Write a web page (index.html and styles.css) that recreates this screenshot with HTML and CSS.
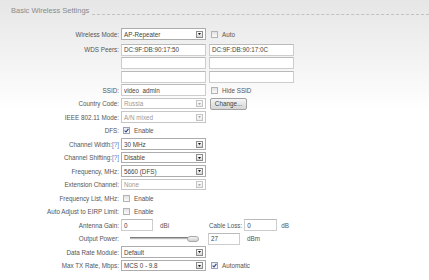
FILE: index.html
```html
<!DOCTYPE html>
<html lang="en">
  <head>
    <meta charset="UTF-8" />
    <title>Basic Wireless Settings</title>
    <link rel="stylesheet" href="styles.css">
  </head>
  <body>
    <div class="legend">
      <span class="legend-text">Basic Wireless Settings</span>
      <span class="legend-line"></span>
    </div>

    <div class="form">
      <div class="row row-first">
        <span class="lbl">Wireless Mode:</span>
        <div class="cell">
          <div class="select">AP-Repeater<span class="arrow"><svg width="3" height="2" viewBox="0 0 3 2"><path d="M0 0H3L1.5 2Z" /></svg></span></div>
        </div>
        <div class="cell2"><span class="check"></span><span class="opt">Auto</span></div>
      </div>

      <div class="row">
        <span class="lbl">WDS Peers:</span>
        <div class="cell"><input class="input" type="text" value="DC:9F:DB:90:17:50"></div>
        <div class="cell2"><input class="input" type="text" value="DC:9F:DB:90:17:0C"></div>
      </div>
      <div class="row">
        <span class="lbl"></span>
        <div class="cell"><input class="input" type="text" value=""></div>
        <div class="cell2"><input class="input" type="text" value=""></div>
      </div>
      <div class="row">
        <span class="lbl"></span>
        <div class="cell"><input class="input" type="text" value=""></div>
        <div class="cell2"><input class="input" type="text" value=""></div>
      </div>

      <div class="row">
        <span class="lbl">SSID:</span>
        <div class="cell"><input class="input" type="text" value="video_admin"></div>
        <div class="cell2"><span class="check"></span><span class="opt">Hide SSID</span></div>
      </div>

      <div class="row">
        <span class="lbl">Country Code:</span>
        <div class="cell">
          <div class="select disabled">Russia<span class="arrow"><svg width="3" height="2" viewBox="0 0 3 2"><path d="M0 0H3L1.5 2Z" /></svg></span></div>
        </div>
        <div class="cell2"><button class="btn">Change...</button></div>
      </div>

      <div class="row">
        <span class="lbl">IEEE 802.11 Mode:</span>
        <div class="cell">
          <div class="select disabled">A/N mixed<span class="arrow"><svg width="3" height="2" viewBox="0 0 3 2"><path d="M0 0H3L1.5 2Z" /></svg></span></div>
        </div>
      </div>

      <div class="row">
        <span class="lbl">DFS:</span>
        <div class="cell"><span class="check on"><svg width="5" height="5" viewBox="0 0 5 5"><path d="M0.6 2.6L2 4L4.4 0.8" /></svg></span><span class="opt">Enable</span></div>
      </div>

      <div class="row">
        <span class="lbl">Channel Width:<span class="help">[?]</span></span>
        <div class="cell">
          <div class="select">30 MHz<span class="arrow"><svg width="3" height="2" viewBox="0 0 3 2"><path d="M0 0H3L1.5 2Z" /></svg></span></div>
        </div>
      </div>

      <div class="row">
        <span class="lbl">Channel Shifting:<span class="help">[?]</span></span>
        <div class="cell">
          <div class="select">Disable<span class="arrow"><svg width="3" height="2" viewBox="0 0 3 2"><path d="M0 0H3L1.5 2Z" /></svg></span></div>
        </div>
      </div>

      <div class="row">
        <span class="lbl">Frequency, MHz:</span>
        <div class="cell">
          <div class="select">5660 (DFS)<span class="arrow"><svg width="3" height="2" viewBox="0 0 3 2"><path d="M0 0H3L1.5 2Z" /></svg></span></div>
        </div>
      </div>

      <div class="row">
        <span class="lbl">Extension Channel:</span>
        <div class="cell">
          <div class="select disabled">None<span class="arrow"><svg width="3" height="2" viewBox="0 0 3 2"><path d="M0 0H3L1.5 2Z" /></svg></span></div>
        </div>
      </div>

      <div class="row">
        <span class="lbl">Frequency List, MHz:</span>
        <div class="cell"><span class="check"></span><span class="opt">Enable</span></div>
      </div>

      <div class="row">
        <span class="lbl">Auto Adjust to EIRP Limit:</span>
        <div class="cell"><span class="check"></span><span class="opt">Enable</span></div>
      </div>

      <div class="row">
        <span class="lbl">Antenna Gain:</span>
        <div class="cell"><input class="input small" type="text" value="0"><span class="unit">dBi</span></div>
        <div class="cell2">
          <span class="lbl2">Cable Loss:</span>
          <input class="input small loss" type="text" value="0"><span class="unit unit-db">dB</span>
        </div>
      </div>

      <div class="row">
        <span class="lbl">Output Power:</span>
        <div class="cell">
          <div class="slider"><span class="track"></span><span class="thumb"></span></div>
        </div>
        <div class="cell2 power"><input class="input small" type="text" value="27"><span class="unit">dBm</span></div>
      </div>

      <div class="row">
        <span class="lbl">Data Rate Module:</span>
        <div class="cell">
          <div class="select">Default<span class="arrow"><svg width="3" height="2" viewBox="0 0 3 2"><path d="M0 0H3L1.5 2Z" /></svg></span></div>
        </div>
      </div>

      <div class="row">
        <span class="lbl">Max TX Rate, Mbps:</span>
        <div class="cell">
          <div class="select">MCS 0 - 9.8<span class="arrow"><svg width="3" height="2" viewBox="0 0 3 2"><path d="M0 0H3L1.5 2Z" /></svg></span></div>
        </div>
        <div class="cell2"><span class="check on"><svg width="5" height="5" viewBox="0 0 5 5"><path d="M0.6 2.6L2 4L4.4 0.8" /></svg></span><span class="opt">Automatic</span></div>
      </div>
    </div>
  </body>
</html>
```

FILE: styles.css
```css
* {
  margin: 0;
  padding: 0;
  box-sizing: border-box;
  font-family: "Liberation Sans", Arial, sans-serif;
}
body {
  width: 429px;
  height: 280px;
  overflow: hidden;
  font-size: 6.3px;
  color: #555;
  background: linear-gradient(#e6e6e6, #f9f9f9 85px, #fff 110px);
}
.legend {
  display: flex;
  height: 15px;
  padding: 6px 0 0 11px;
}
.legend-text {
  font-size: 7.5px;
  line-height: 9px;
  color: #8a8a8a;
}
.legend-line {
  flex: 1;
  margin-left: 3px;
  border-bottom: 1px dashed #c2c2c2;
}
.form {
  padding-top: 12.25px;
}
.row {
  display: flex;
  align-items: center;
  height: 13.5px;
}
.row-first {
  margin-bottom: 2px;
}
.lbl {
  width: 119px;
  text-align: right;
  white-space: nowrap;
}
.help {
  color: #4a78c8;
}
.cell {
  display: flex;
  align-items: center;
  width: 88px;
  margin-left: 2px;
}
.cell2 {
  display: flex;
  align-items: center;
}
.input {
  width: 85px;
  height: 12px;
  padding: 0 2px;
  border: 1px solid #cdcdcd;
  border-top-color: #bababa;
  background: #fff;
  color: #444;
  font-size: 6.3px;
  outline: none;
}
.input.small {
  width: 32px;
}
.input.loss {
  width: 33px;
  margin-left: 2px;
}
.unit {
  margin-left: 7px;
}
.unit-db {
  margin-left: 4px;
}
.select {
  display: flex;
  align-items: center;
  justify-content: space-between;
  width: 85px;
  height: 11.5px;
  padding-left: 2px;
  padding-right: 2px;
  border: 1px solid #acacac;
  background: #fff;
  color: #444;
}
.arrow {
  display: flex;
  align-items: center;
  justify-content: center;
  width: 7px;
  height: 7px;
  border: 1px solid #8c8c8c;
  background: linear-gradient(#fdfdfd, #d6d6d6);
}
.arrow path {
  fill: #111;
}
.select.disabled {
  border-color: #c6c6c6;
  color: #9a9a9a;
}
.select.disabled .arrow {
  border-color: #c4c4c4;
  background: linear-gradient(#fbfbfb, #ececec);
}
.select.disabled .arrow path {
  fill: #a8a8a8;
}
.check {
  display: flex;
  align-items: center;
  justify-content: center;
  width: 7px;
  height: 7px;
  margin-left: 2px;
  border: 1px solid #b3b3b3;
  background: linear-gradient(#e2e2e2, #fafafa);
}
.check.on {
  border-color: #9aa3b5;
  background: linear-gradient(#e6eaf2, #ffffff);
}
.check path {
  fill: none;
  stroke: #2b3f86;
  stroke-width: 1.1;
}
.opt {
  margin-left: 4px;
}
.btn {
  width: 37px;
  height: 12px;
  margin-left: 1px;
  border: 1px solid #a2a2a2;
  border-radius: 2px;
  background: linear-gradient(#f6f6f6, #d5d5d5);
  color: #444;
  font-size: 6.3px;
}
.lbl2 {
  white-space: nowrap;
}
.slider {
  display: flex;
  align-items: center;
  margin-left: 9px;
}
.track {
  width: 58px;
  height: 3px;
  border-top: 1px solid #7e7e7e;
  border-bottom: 1px solid #f2f2f2;
  background: #b9b9b9;
}
.thumb {
  width: 12px;
  height: 6px;
  margin-left: -1px;
  border: 1px solid #a8a8a8;
  border-radius: 3px;
  background: linear-gradient(#f4f4f4, #cfcfcf);
}
.power {
  margin-left: -1px;
}
```
